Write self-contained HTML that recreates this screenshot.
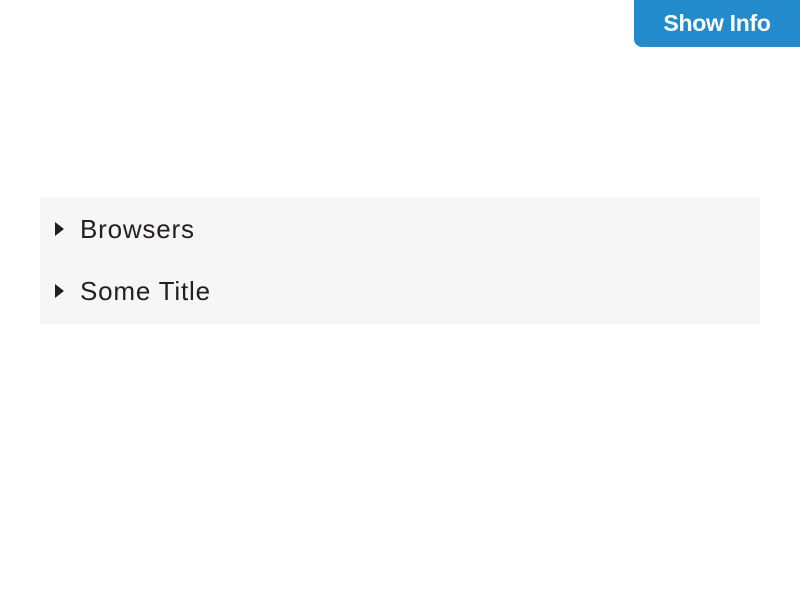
<!DOCTYPE html>
<html><head><style>
body{margin:0;width:800px;height:600px;background:#fff;position:relative;font-family:"Liberation Sans",sans-serif;overflow:hidden}
.btn{position:absolute;left:634px;top:0;width:166px;height:47px;background:#238acc;border-bottom-left-radius:8px;color:#fff;font-size:23px;font-weight:bold;line-height:46px;text-align:center;letter-spacing:-0.3px}
.panel{position:absolute;left:40px;top:198px;width:720px;height:126px;background:#f6f6f6}
.row{position:absolute;left:0;height:30px;color:#231f20;font-size:26px;line-height:30px;letter-spacing:0.8px}
.row span{position:absolute;left:40px;white-space:nowrap}
.tri{position:absolute;left:15px;top:8px;width:0;height:0;border-top:7px solid transparent;border-bottom:7px solid transparent;border-left:9px solid #231f20}
</style></head><body>
<div class="btn">Show Info</div>
<div class="panel">
<div class="row" style="top:16px"><div class="tri"></div><span>Browsers</span></div>
<div class="row" style="top:78px"><div class="tri"></div><span>Some Title</span></div>
</div>
</body></html>
